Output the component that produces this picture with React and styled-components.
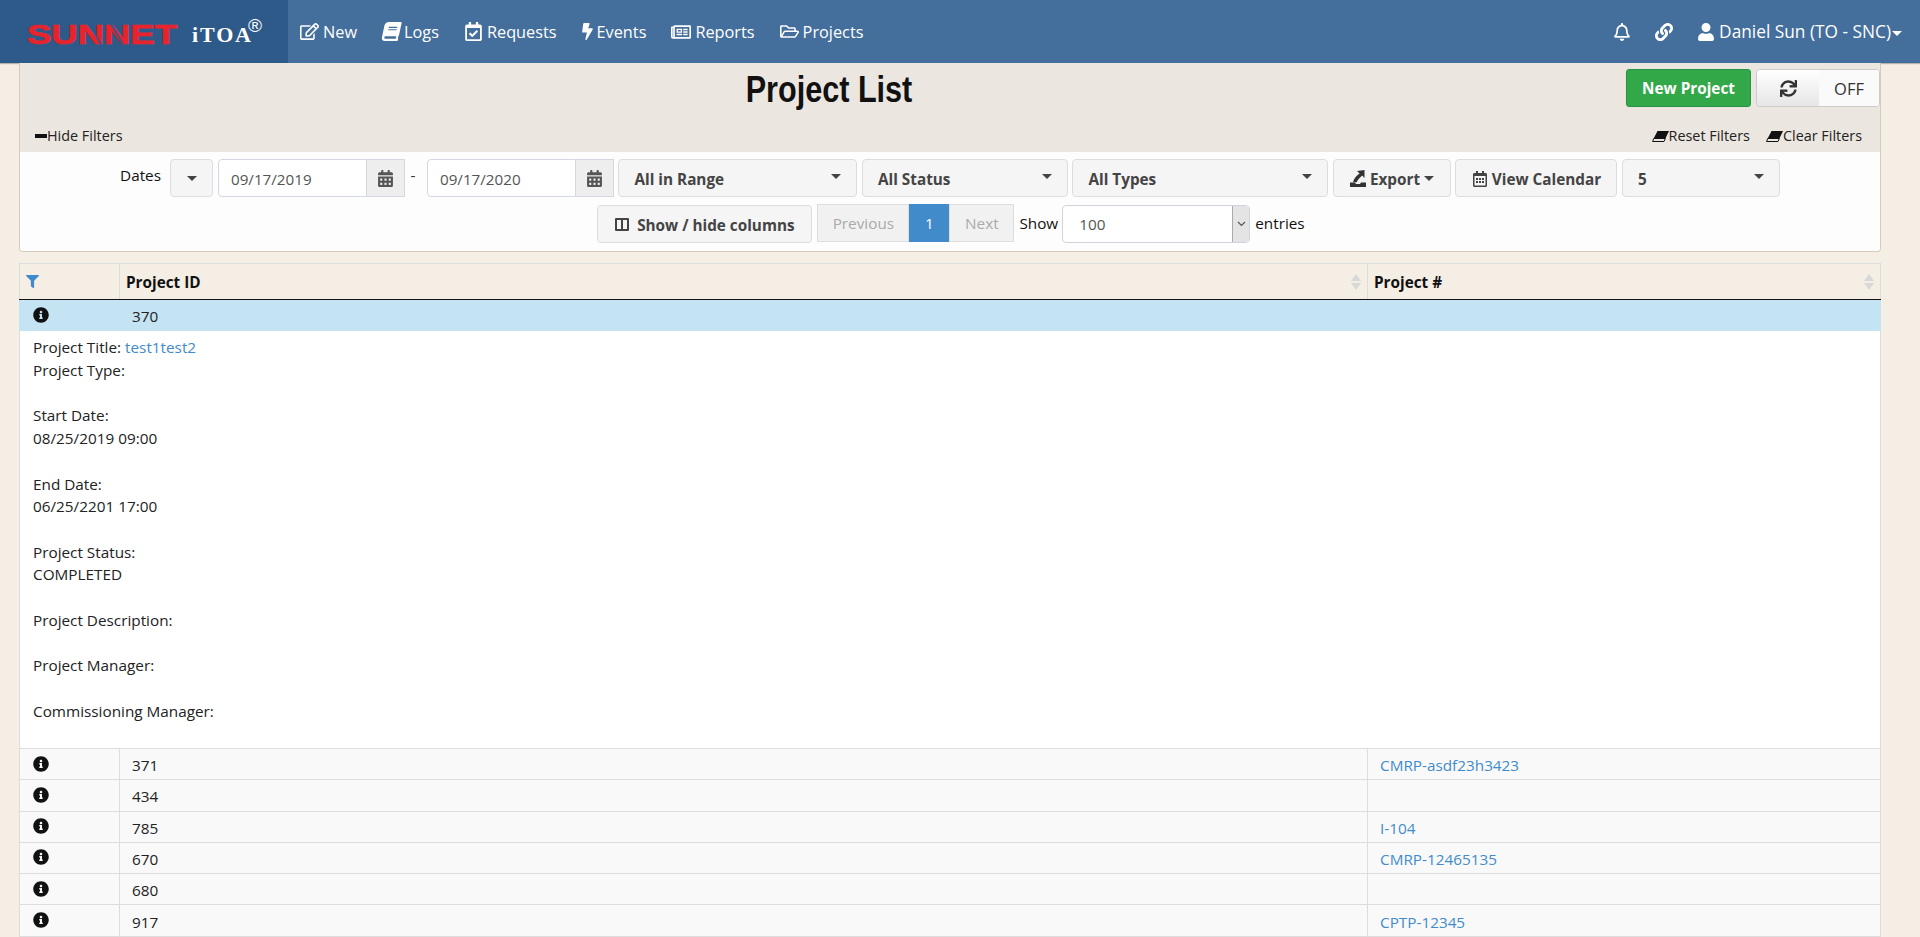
import React from 'react';
import styled, { createGlobalStyle } from 'styled-components';
import {
    FaRegEdit, FaBook, FaRegCalendarCheck, FaBolt, FaRegNewspaper, FaRegFolderOpen,
    FaRegBell, FaLink, FaUser, FaSync, FaCalendarAlt, FaRegCalendarAlt,
    FaInfoCircle, FaFilter,
} from 'react-icons/fa';

const GlobalStyle = createGlobalStyle`
    html, body {
        margin: 0;
        height: 100%;
        overflow: hidden;
        background: #f5eee5;
        font-family: "Open Sans", "Noto Sans", sans-serif;
        font-size: 15.3px;
        color: #111;
    }
    * { box-sizing: border-box; }
`;

const navLinks = [
    { label: 'New', Icon: FaRegEdit },
    { label: 'Logs', Icon: FaBook },
    { label: 'Requests', Icon: FaRegCalendarCheck },
    { label: 'Events', Icon: FaBolt },
    { label: 'Reports', Icon: FaRegNewspaper },
    { label: 'Projects', Icon: FaRegFolderOpen },
];

const rows = [
    { id: '371', num: 'CMRP-asdf23h3423' },
    { id: '434', num: '' },
    { id: '785', num: 'I-104' },
    { id: '670', num: 'CMRP-12465135' },
    { id: '680', num: '' },
    { id: '917', num: 'CPTP-12345' },
];

function Logo() {
    return (
        <svg width="245" height="40" viewBox="0 0 245 40">
            <text x="0" y="31.5" fontFamily="Liberation Sans" fontWeight="700" fontSize="27" fill="#e8232b"
                stroke="#e8232b" strokeWidth=".7" textLength="150" lengthAdjust="spacingAndGlyphs">SUNNET</text>
            <path d="M62 12l12 20M84 12l12 20" stroke="#2e5a8a" strokeWidth="1.6" />
            <text x="165" y="29.5" fontFamily="Liberation Serif" fontWeight="700" fontSize="22" fill="#fff"
                textLength="59" lengthAdjust="spacing">iTOA</text>
            <text x="221" y="19.5" fontFamily="Liberation Sans" fontSize="19" fill="#fff">®</text>
        </svg>
    );
}

function ExportIcon() {
    return (
        <svg width="16" height="17" viewBox="0 0 16 17" fill="#333">
            <path d="M0 12.5h5l1 1.5h4l1-1.5h5V17H0z" />
            <path d="M14.5 0v8l-2.4-2.4C9.6 8 7.8 9.5 6.8 12.2H3C4 8.6 6.4 5.8 9.6 3.6L7 1z" />
        </svg>
    );
}

function EraserIcon() {
    return (
        <svg width="17" height="11" viewBox="0 0 17 11">
            <path d="M5.5 0H17l-3.6 7.5H1.7z" fill="#111" />
            <path d="M1.7 7.5h11.7l-1.4 3H.6z" fill="none" stroke="#111" />
        </svg>
    );
}

function Caret() {
    return <CaretMark />;
}

function App() {
    return (
        <Page>
            <GlobalStyle />
            <Navbar>
                <Brand><Logo /></Brand>
                <NavList>
                    {navLinks.map(({ label, Icon }) => (
                        <NavLink key={label}><Icon />{label}</NavLink>
                    ))}
                </NavList>
                <NavRight>
                    <NavIcon><FaRegBell /></NavIcon>
                    <NavIcon><FaLink /></NavIcon>
                    <NavUser><FaUser />Daniel Sun (TO - SNC)<UserCaret /></NavUser>
                </NavRight>
            </Navbar>

            <Content>
                <FilterPanel>
                    <PanelHead>
                        <TitleRow>
                            <Title>Project List</Title>
                            <TopActions>
                                <NewButton>New Project</NewButton>
                                <Toggle>
                                    <ToggleIcon><FaSync /></ToggleIcon>
                                    <ToggleOff>OFF</ToggleOff>
                                </Toggle>
                            </TopActions>
                        </TitleRow>
                        <FilterLinks>
                            <FilterLink><MinusMark />Hide Filters</FilterLink>
                            <FilterLinkGroup>
                                <FilterLink><EraserIcon />Reset Filters</FilterLink>
                                <FilterLink><EraserIcon />Clear Filters</FilterLink>
                            </FilterLinkGroup>
                        </FilterLinks>
                    </PanelHead>
                    <PanelBody>
                        <FilterRow>
                            <DatesLabel>Dates</DatesLabel>
                            <CaretButton><Caret /></CaretButton>
                            <DateGroup>
                                <DateInput>09/17/2019</DateInput>
                                <DateAddon><FaCalendarAlt /></DateAddon>
                            </DateGroup>
                            <Dash>-</Dash>
                            <DateGroup>
                                <DateInput>09/17/2020</DateInput>
                                <DateAddon><FaCalendarAlt /></DateAddon>
                            </DateGroup>
                            <Dropdown $width={239}>All in Range<Caret /></Dropdown>
                            <Dropdown $width={206}>All Status<Caret /></Dropdown>
                            <Dropdown $width={256}>All Types<Caret /></Dropdown>
                            <ActionButton $width={118}><ExportIcon />Export<Caret /></ActionButton>
                            <ActionButton $width={162}><FaRegCalendarAlt />View Calendar</ActionButton>
                            <Dropdown $width={158}>5<Caret /></Dropdown>
                        </FilterRow>
                        <PagerRow>
                            <ColumnsButton>
                                <ColumnsIcon />Show / hide columns
                            </ColumnsButton>
                            <Pager>
                                <PageItem $width={92}>Previous</PageItem>
                                <PageItem $width={40} $active>1</PageItem>
                                <PageItem $width={65}>Next</PageItem>
                            </Pager>
                            <ShowLabel>Show</ShowLabel>
                            <EntriesSelect>
                                <span>100</span>
                                <SelectArrow>
                                    <svg width="9" height="6" viewBox="0 0 9 6" fill="none" stroke="#555" strokeWidth="1.2">
                                        <path d="M1 1l3.5 3.5L8 1" />
                                    </svg>
                                </SelectArrow>
                            </EntriesSelect>
                            <ShowLabel>entries</ShowLabel>
                        </PagerRow>
                    </PanelBody>
                </FilterPanel>

                <Table>
                    <colgroup>
                        <col style={{ width: 100 }} />
                        <col style={{ width: 1248 }} />
                        <col />
                    </colgroup>
                    <thead>
                        <tr>
                            <HeadCell><FaFilter color="#3f8acb" size={13} /></HeadCell>
                            <HeadCell>Project ID<SortMark /></HeadCell>
                            <HeadCell>Project #<SortMark /></HeadCell>
                        </tr>
                    </thead>
                    <tbody>
                        <tr>
                            <Cell $open><InfoIcon /></Cell>
                            <IdCell $open>370</IdCell>
                            <Cell $open />
                        </tr>
                        <tr>
                            <DetailCell colSpan={3}>
                                Project Title: <RowLink>test1test2</RowLink><br />
                                Project Type:<br /><br />
                                Start Date:<br />08/25/2019 09:00<br /><br />
                                End Date:<br />06/25/2201 17:00<br /><br />
                                Project Status:<br />COMPLETED<br /><br />
                                Project Description:<br /><br />
                                Project Manager:<br /><br />
                                Commissioning Manager:<br /><br />
                            </DetailCell>
                        </tr>
                        {rows.map(row => (
                            <tr key={row.id}>
                                <Cell><InfoIcon /></Cell>
                                <IdCell>{row.id}</IdCell>
                                <Cell><RowLink>{row.num}</RowLink></Cell>
                            </tr>
                        ))}
                    </tbody>
                </Table>
            </Content>
        </Page>
    );
}

const Page = styled.div`
    height: 937px;
    overflow: hidden;
`;

const Navbar = styled.nav`
    height: 63px;
    display: flex;
    align-items: center;
    background: #446e9b;
    color: #fff;
    font-size: 16.3px;
    box-shadow: 0 1px 1px rgba(0, 0, 0, .25);
`;

const Brand = styled.div`
    width: 288px;
    height: 100%;
    flex: none;
    display: flex;
    align-items: center;
    padding-left: 27px;
    background: #2e5a8a;
`;

const NavList = styled.div`
    display: flex;
    gap: 25px;
    margin-left: 12px;
`;

const NavLink = styled.a`
    display: flex;
    align-items: center;
    gap: 4px;
    svg { font-size: 19px; }
    &:nth-child(2) svg { transform: skewX(-12deg); margin-right: -1px; }
    &:nth-child(4) svg { font-size: 17px; margin: 0 -3px; }
    &:nth-child(5) svg { font-size: 20px; }
`;

const NavRight = styled.div`
    margin-left: auto;
    display: flex;
    align-items: center;
    padding-right: 18px;
`;

const NavIcon = styled.span`
    display: flex;
    font-size: 18px;
    margin-right: 24px;
`;

const NavUser = styled.span`
    display: flex;
    align-items: center;
    gap: 4px;
    font-size: 17.3px;
    svg { font-size: 18px; }
`;

const UserCaret = styled.i`
    width: 0;
    height: 0;
    margin: 3px 0 0 -3px;
    border-left: 5px solid transparent;
    border-right: 5px solid transparent;
    border-top: 5px solid #fff;
`;

const Content = styled.main`
    width: 1862px;
    margin-left: 19px;
`;

const FilterPanel = styled.section`
    height: 189px;
    border: 1px solid #d5cabb;
    border-top: 0;
    border-radius: 0 0 4px 4px;
    background: #fff;
    overflow: hidden;
`;

const PanelHead = styled.div`
    height: 89px;
    background: #ebe6df;
`;

const TitleRow = styled.div`
    position: relative;
    height: 58px;
    display: flex;
    justify-content: flex-end;
    padding-top: 6px;
`;

const Title = styled.h1`
    position: absolute;
    left: -1px;
    top: 5px;
    width: 1620px;
    margin: 0;
    text-align: center;
    font: 700 36px/44px "Liberation Sans", Arial, sans-serif;
    transform: scaleX(.85);
    color: #111;
`;

const TopActions = styled.div`
    display: flex;
    gap: 5px;
    height: 38px;
`;

const NewButton = styled.button`
    width: 125px;
    border: 1px solid #2a9143;
    border-radius: 3px;
    background: #33a849;
    color: #fff;
    font: 700 15.3px "Open Sans", sans-serif;
`;

const Toggle = styled.div`
    width: 124px;
    display: flex;
    border: 1px solid #ccc;
    border-radius: 4px;
    overflow: hidden;
`;

const ToggleIcon = styled.span`
    flex: 0 0 62px;
    display: flex;
    align-items: center;
    justify-content: center;
    background: linear-gradient(#fff, #e6e6e6);
    font-size: 17px;
    color: #333;
`;

const ToggleOff = styled.span`
    flex: 1;
    display: flex;
    align-items: center;
    justify-content: center;
    background: #fafafa;
    font-size: 16.5px;
    color: #333;
`;

const FilterLinks = styled.div`
    display: flex;
    justify-content: space-between;
    padding: 5px 18px 0 15px;
`;

const FilterLinkGroup = styled.div`
    display: flex;
    gap: 16px;
`;

const FilterLink = styled.a`
    display: flex;
    align-items: center;
    font-size: 14.4px;
    line-height: 20px;
    color: #222;
`;

const MinusMark = styled.i`
    width: 12px;
    height: 4px;
    background: #111;
`;

const PanelBody = styled.div`
    padding-top: 7px;
    background: #fdfdfd;
    height: 100px;
`;

const FilterRow = styled.div`
    display: flex;
    justify-content: center;
    gap: 4.5px;
    height: 38px;
`;

const DatesLabel = styled.label`
    margin: 0 5px 0 0;
    line-height: 33px;
`;

const baseButton = `
    height: 38px;
    display: flex;
    align-items: center;
    padding-top: 1px;
    border: 1px solid #ddd;
    border-radius: 4px;
    background: #f5f5f5;
    color: #444;
    font-family: "Open Sans", sans-serif;
    font-size: 15.3px;
    font-weight: 700;
`;

const CaretButton = styled.div`
    ${baseButton}
    width: 43px;
    justify-content: center;
`;

const CaretMark = styled.i`
    width: 0;
    height: 0;
    border-left: 5px solid transparent;
    border-right: 5px solid transparent;
    border-top: 5px solid #444;
`;

const DateGroup = styled.div`
    display: flex;
    height: 38px;
`;

const DateInput = styled.div`
    width: 149px;
    padding: 1px 12px 0;
    display: flex;
    align-items: center;
    border: 1px solid #d3d8e2;
    border-radius: 4px 0 0 4px;
    background: #fff;
    color: #555;
    font-size: 15.2px;
`;

const DateAddon = styled.div`
    width: 38px;
    display: flex;
    align-items: center;
    justify-content: center;
    border: 1px solid #d3d8e2;
    border-left: 0;
    background: #eeeeee;
    color: #555;
    font-size: 17px;
`;

const Dash = styled.span`
    width: 9px;
    margin: 0 3px 0 1px;
    line-height: 33px;
    color: #333;
`;

const Dropdown = styled.div`
    ${baseButton}
    width: ${p => p.$width}px;
    padding: 1px 15px 0;
    justify-content: space-between;
    ${CaretMark} { margin-top: -4px; }
`;

const ActionButton = styled.div`
    ${baseButton}
    width: ${p => p.$width}px;
    justify-content: center;
    gap: 4px;
    svg { flex: none; font-size: 16px; }
`;

const PagerRow = styled.div`
    display: flex;
    justify-content: center;
    align-items: flex-start;
    margin-top: 7px;
    padding-left: 6px;
`;

const ColumnsButton = styled.div`
    ${baseButton}
    width: 215px;
    margin-top: 1px;
    justify-content: center;
    gap: 8px;
`;

const ColumnsIcon = styled.i`
    position: relative;
    width: 14px;
    height: 13px;
    border: 2px solid #444;
    border-radius: 1px;
    &::after {
        content: '';
        position: absolute;
        left: 4px;
        top: 0;
        bottom: 0;
        width: 2px;
        background: #444;
    }
`;

const Pager = styled.div`
    display: flex;
    height: 38px;
    margin-left: 5px;
`;

const PageItem = styled.span`
    width: ${p => p.$width}px;
    display: flex;
    align-items: center;
    justify-content: center;
    background: ${p => (p.$active ? '#428bca' : '#f1f1f1')};
    border: 1px solid ${p => (p.$active ? '#428bca' : '#ddd')};
    color: ${p => (p.$active ? '#fff' : '#aaa')};
`;

const ShowLabel = styled.span`
    margin: 0 4px 0 5px;
    line-height: 38px;
`;

const EntriesSelect = styled.div`
    width: 188px;
    height: 38px;
    margin-top: 1px;
    display: flex;
    align-items: center;
    justify-content: space-between;
    padding-left: 16px;
    border: 1px solid #d3d3dd;
    border-radius: 4px;
    background: #fff;
    color: #555;
    overflow: hidden;
`;

const SelectArrow = styled.span`
    width: 17px;
    height: 100%;
    display: flex;
    align-items: center;
    justify-content: center;
    background: #e4e4e4;
    border-left: 1px solid #aaa;
`;

const Table = styled.table`
    width: 1862px;
    margin-top: 11px;
    table-layout: fixed;
    border-collapse: collapse;
    background: #f9f9f9;
    font-size: 15.3px;
`;

const HeadCell = styled.th`
    position: relative;
    height: 36px;
    padding: 0 6px;
    text-align: left;
    background: #f5eee5;
    border: 1px solid #ddd;
    border-bottom: 1px solid #111;
    font-weight: 700;
    color: #111;
    svg { display: block; }
`;

const SortMark = styled.i`
    position: absolute;
    right: 6px;
    top: 10px;
    width: 0;
    height: 0;
    border-left: 5px solid transparent;
    border-right: 5px solid transparent;
    border-bottom: 7px solid #d8d8d8;
    &::after {
        content: '';
        position: absolute;
        left: -5px;
        top: 9px;
        border-left: 5px solid transparent;
        border-right: 5px solid transparent;
        border-top: 7px solid #d8d8d8;
    }
`;

const Cell = styled.td`
    height: 31.3px;
    padding: 2px 12px 0;
    border: 1px solid #ddd;
    background: ${p => (p.$open ? '#c4e3f3' : '#f9f9f9')};
    border-color: ${p => (p.$open ? '#c4e3f3' : '#ddd')};
    color: #222;
    svg { display: block; margin-top: -3px; }
`;

const IdCell = styled(Cell)`
    border-left-color: #ddd;
`;

const InfoIcon = styled(FaInfoCircle)`
    font-size: 16px;
    margin-left: 1px;
    color: #111;
`;

const DetailCell = styled.td`
    padding: 5px 12px 3px 13px;
    background: #fff;
    border: 1px solid #ddd;
    border-top: 0;
    line-height: 22.7px;
    color: #222;
`;

const RowLink = styled.a`
    color: #428bca;
`;

export default App;
